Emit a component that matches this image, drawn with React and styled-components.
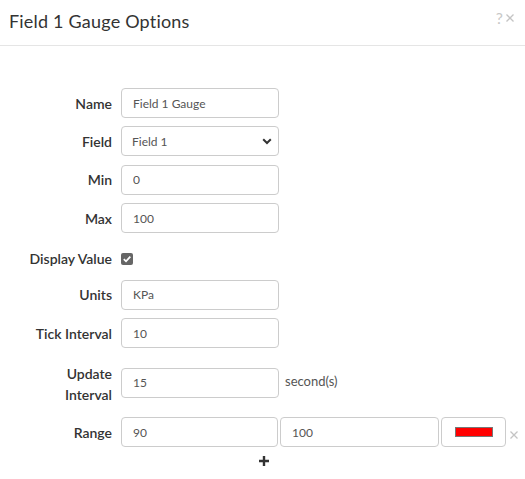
import styled, { createGlobalStyle } from "styled-components";

const GlobalStyle = createGlobalStyle`
  body {
    margin: 0;
    background: #fff;
    font-family: Lato, "Liberation Sans", sans-serif;
  }
`;

const Dialog = styled.div`
  width: 525px;
  background: #fff;
`;

const Header = styled.div`
  height: 46px;
  border-bottom: 1px solid #e5e5e5;
  display: flex;
  align-items: center;
  justify-content: space-between;
  padding: 0 11px 4px 9px;
  box-sizing: border-box;
`;

const Title = styled.h4`
  margin: 0;
  font-size: 18px;
  font-weight: 400;
  color: #333;
  letter-spacing: 0.2px;
`;

const HeaderTools = styled.div`
  display: flex;
  align-items: center;
  gap: 3px;
  align-self: flex-start;
  margin-top: 8px;
  color: #c8c8c8;
  font-size: 16px;
`;

const Form = styled.form`
  display: flex;
  flex-direction: column;
  gap: 8.4px;
  padding: 42px 0 0;
`;

const Row = styled.div`
  display: flex;
  align-items: center;
  min-height: ${({ $tall }) => ($tall ? "52px" : "30px")};
`;

const Label = styled.label`
  width: 112px;
  margin-right: 9px;
  text-align: right;
  font-size: 14px;
  font-weight: 600;
  color: #333;
  line-height: 21px;
  padding-top: ${({ $nudge }) => $nudge || 0};
`;

const Input = styled.input`
  box-sizing: border-box;
  width: ${({ $w }) => $w || "158px"};
  height: 30px;
  padding: 0 11px;
  border: 1px solid #ccc;
  border-radius: 4px;
  font-family: Lato, "Liberation Sans", sans-serif;
  font-size: 12px;
  color: #555;
  outline: none;
`;

const SelectWrap = styled.div`
  position: relative;
  width: 158px;
`;

const Select = styled.select`
  box-sizing: border-box;
  width: 100%;
  height: 30px;
  padding: 0 10px;
  border: 1px solid #ccc;
  border-radius: 4px;
  background: #fff;
  appearance: none;
  font-family: Lato, "Liberation Sans", sans-serif;
  font-size: 12px;
  color: #555;
`;

const Chevron = styled.svg`
  position: absolute;
  right: 7px;
  top: 12px;
  pointer-events: none;
`;

const Check = styled.span`
  width: 12px;
  height: 12px;
  border-radius: 2px;
  background: #666;
  display: flex;
  align-items: center;
  justify-content: center;
  margin-top: 4px;
`;

const Suffix = styled.span`
  margin-left: 6px;
  font-size: 13px;
  color: #555;
  margin-top: -3px;
`;

const RangeGroup = styled.div`
  display: flex;
  align-items: center;
  gap: 2px;
`;

const ColorButton = styled.button`
  box-sizing: border-box;
  width: 65px;
  height: 30px;
  border: 1px solid #ccc;
  border-radius: 4px;
  background: #fff;
  display: flex;
  align-items: center;
  justify-content: center;
  padding: 0;
`;

const Swatch = styled.span`
  width: 36px;
  height: 8px;
  background: ${({ $color }) => $color};
  border: 1px solid #777;
`;

const Remove = styled.svg`
  margin-left: 4px;
  margin-top: 5px;
`;

const AddRow = styled.div`
  display: flex;
  justify-content: center;
  padding-left: 3px;
`;

const Cross = ({ size = 8, ...rest }) => (
  <svg width={size} height={size} viewBox="0 0 8 8" {...rest}>
    <path d="M0.5 0.5 7.5 7.5M7.5 0.5 0.5 7.5" stroke="#c4c4c4" strokeWidth="1.3" />
  </svg>
);

export default function App() {
  return (
    <Dialog>
      <GlobalStyle />
      <Header>
        <Title>Field 1 Gauge Options</Title>
        <HeaderTools>
          <span>?</span>
          <Cross size={8} />
        </HeaderTools>
      </Header>

      <Form>
        <Row>
          <Label>Name</Label>
          <Input defaultValue="Field 1 Gauge" />
        </Row>
        <Row>
          <Label>Field</Label>
          <SelectWrap>
            <Select defaultValue="field1">
              <option value="field1">Field 1</option>
              <option value="field2">Field 2</option>
            </Select>
            <Chevron width="10" height="7" viewBox="0 0 10 7">
              <path d="M1.2 1.2 5 5 8.8 1.2" fill="none" stroke="#333" strokeWidth="2" />
            </Chevron>
          </SelectWrap>
        </Row>
        <Row>
          <Label>Min</Label>
          <Input defaultValue="0" />
        </Row>
        <Row>
          <Label>Max</Label>
          <Input defaultValue="100" />
        </Row>
        <Row>
          <Label $nudge="4px">Display Value</Label>
          <Check>
            <svg width="10" height="10" viewBox="0 0 10 10">
              <path d="M1.8 5.2 4 7.3 8.3 2.6" fill="none" stroke="#fff" strokeWidth="1.8" />
            </svg>
          </Check>
        </Row>
        <Row>
          <Label>Units</Label>
          <Input defaultValue="KPa" />
        </Row>
        <Row>
          <Label>Tick Interval</Label>
          <Input defaultValue="10" />
        </Row>
        <Row $tall>
          <Label $nudge="3px">
            Update
            <br />
            Interval
          </Label>
          <Input defaultValue="15" />
          <Suffix>second(s)</Suffix>
        </Row>
        <Row>
          <Label>Range</Label>
          <RangeGroup>
            <Input $w="157px" defaultValue="90" />
            <Input $w="159px" defaultValue="100" />
            <ColorButton type="button">
              <Swatch $color="#ff0000" />
            </ColorButton>
          </RangeGroup>
          <Remove as={Cross} size={8} />
        </Row>
        <AddRow>
          <svg width="10" height="10" viewBox="0 0 10 10">
            <path d="M5 0v10M0 5h10" stroke="#333" strokeWidth="2.4" />
          </svg>
        </AddRow>
      </Form>
    </Dialog>
  );
}
